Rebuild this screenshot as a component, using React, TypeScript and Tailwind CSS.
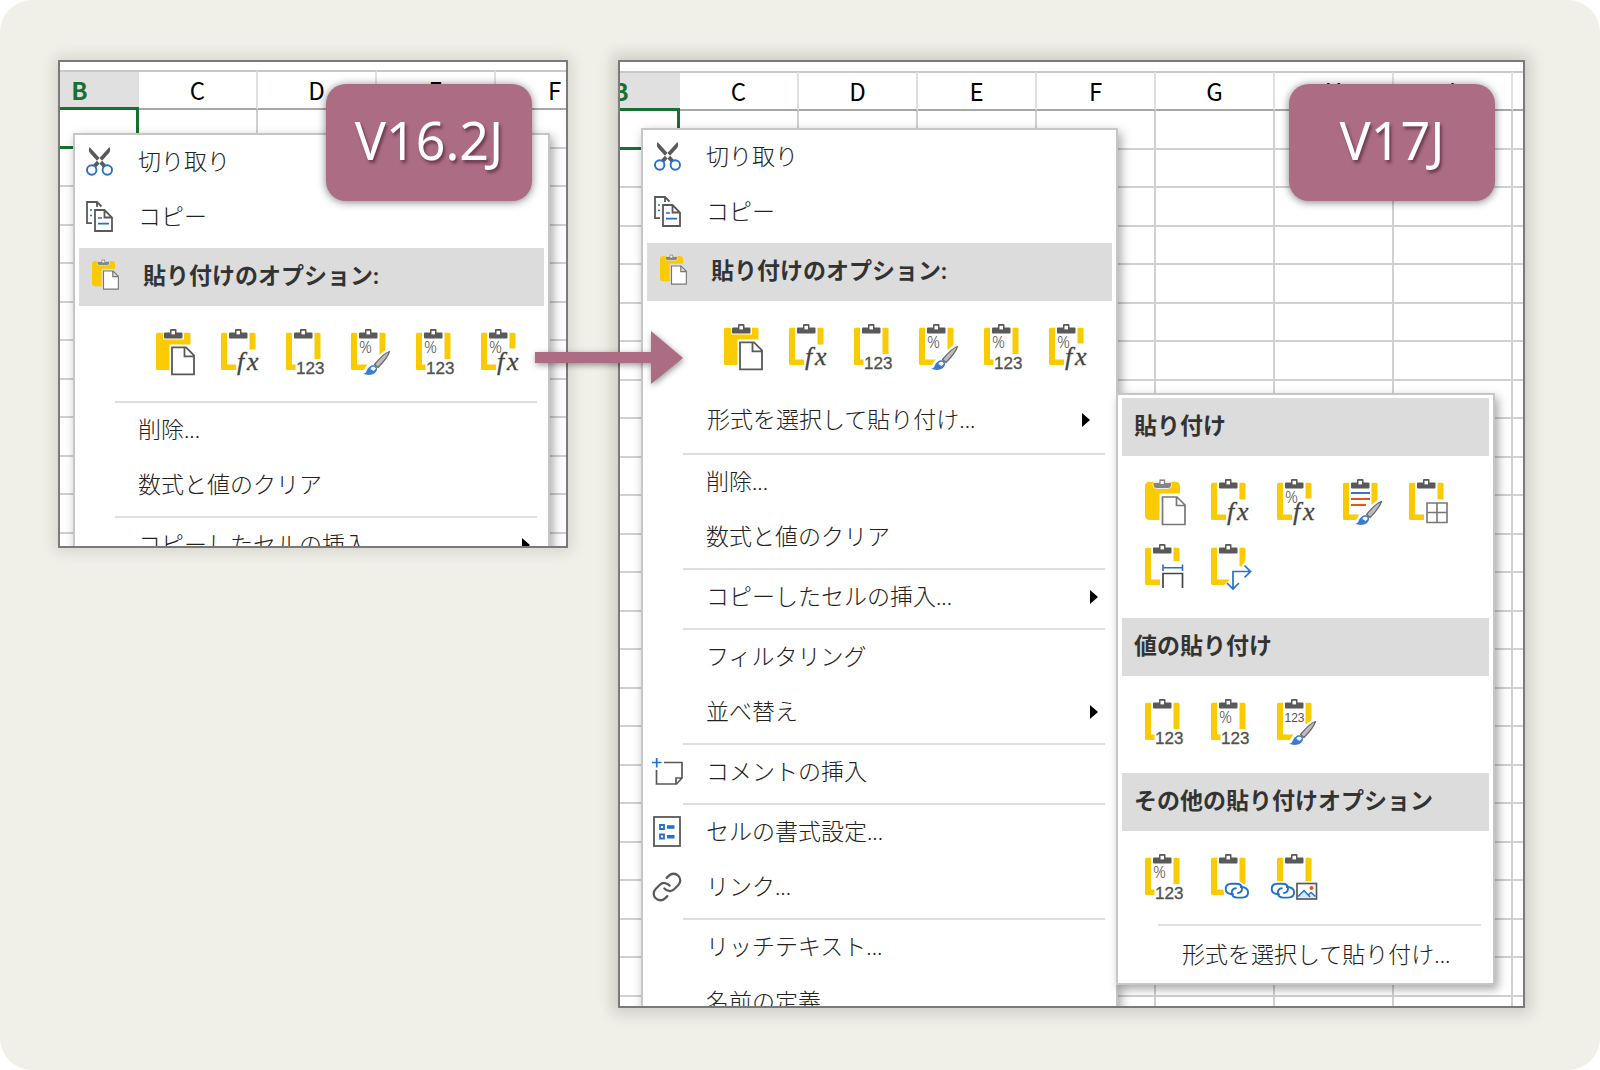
import React from "react";
import { Link as LinkIcon } from "lucide-react";

const GRAY = "#595959";
const BLUE = "#2570c8";
const YELLOW = "#f9cb00";

/* ---------- clipboard icons (40 x 48 artboard) ---------- */

function Clip({ color = GRAY }: { color?: string }) {
  return (
    <g>
      <path d="M7 2.5h21v8H7z" fill="#fff" />
      <path d="M8 4.5q0-1 1-1h5V1q0-1 1-1h4.500q1 0 1 1v2.500h5q1 0 1 1v4q0 1-1 1H9q-1 0-1-1z" fill={color} />
      <rect x="15.500" y="1.800" width="3.500" height="3.600" fill="#fff" />
    </g>
  );
}

function Frame({ arm = 20.500, foot = 15 }: { arm?: number; foot?: number }) {
  return (
    <g fill={YELLOW}>
      <path d={`M1.500 3.700H6V35.500H${foot}V41H1.500Q0 41 0 39.500V5.200Q0 3.700 1.500 3.700Z`} />
      <path d={`M28.500 3.700H33Q34.500 3.700 34.500 5.200V${arm}H28.500Z`} />
    </g>
  );
}

function Svg({ children }: { children: React.ReactNode }) {
  return (
    <svg viewBox="0 0 40 48" className="h-12 w-10 overflow-visible" aria-hidden="true">
      {children}
    </svg>
  );
}

const Fx = () => (
  <text x="16 26" y="41" fontFamily="Liberation Serif, serif" fontStyle="italic" fontSize="26" fill="#444" stroke="#444" strokeWidth="0.3">
    fx
  </text>
);
const Num = () => (
  <text x="10" y="45" fontFamily="Liberation Sans, sans-serif" fontSize="17" fill="#505050" stroke="#505050" strokeWidth="0.3">
    123
  </text>
);
const Percent = () => (
  <text x="8" y="24" fontFamily="Noto Sans, sans-serif" fontWeight="300" fontSize="16" fill="#505050">
    %
  </text>
);

const Brush = () => (
  <g>
    <path d="M9 47 16 36 38 18 42 24 26 46Z" fill="#fff" />
    <path d="M38.500 22.500Q33 24 23.500 35.500L27 38.500Q36.500 29 38.500 22.500Z" fill="#bdbdbd" stroke="#666" strokeWidth="1.200" strokeLinejoin="round" />
    <path d="M22.500 36.500q2.700.3 3.500 3 .2 4-5 6-4.500 1.200-9-.7 3-.3 4-3.800 2-4.500 6.500-4.500Z" fill="#3d7bcb" />
    <path d="M22 36.800q3 0 3.500 3l-2.800 3-4-2.500q.3-3 3.300-3.500Z" fill="#fff" stroke="#3d7bcb" strokeWidth="1.200" />
  </g>
);

const CHAIN_LEFT = "M8.500 11.800Q1.200 11.500 1.200 6.500 1.200 1.200 7 1.200H12Q17.500 1.200 17.500 6 17.500 10 13.500 10.500";
const CHAIN_RIGHT = "M16.300 4.500Q23.600 4.800 23.600 9.800 23.600 15.100 17.800 15.100H12.800Q7.300 15.100 7.300 10.300 7.300 6.300 11.300 5.800";

const Chain = () => (
  <g fill="none" strokeLinecap="round">
    <path d={CHAIN_LEFT} stroke="#fff" strokeWidth="5" />
    <path d={CHAIN_RIGHT} stroke="#fff" strokeWidth="5" />
    <path d={CHAIN_LEFT} stroke={BLUE} strokeWidth="1.900" />
    <path d={CHAIN_RIGHT} stroke={BLUE} strokeWidth="1.900" />
  </g>
);

function PasteIcon() {
  return (
    <Svg>
      <path d="M1.500 3.700H33Q34.500 3.700 34.500 5.200V15.500H13.500V41H1.500Q0 41 0 39.500V5.200Q0 3.700 1.500 3.700Z" fill={YELLOW} />
      <Clip />
      <path d="M16 18.300H30L38 26.300V45.300H16ZM28.500 18.300V27.300H38" fill="#fff" stroke={GRAY} strokeWidth="1.800" />
    </Svg>
  );
}

function PasteRound({ className }: { className: string }) {
  return (
    <svg viewBox="0 0 41 48" className={className} aria-hidden="true">
      <path d="M5 2.700H30Q35 2.700 35 7.700V14.500H14.500V41H5Q0 41 0 36V7.700Q0 2.700 5 2.700Z" fill={YELLOW} />
      <path d="M9 3.500h5V1q0-1 1-1h4.500q1 0 1 1v2.500h5q1 0 1 1V6q0 3.500-3.500 3.500H11.500Q8 9.500 8 6V4.500q0-1 1-1z" fill="#858585" stroke="#fff" strokeWidth="0.800" />
      <rect x="15.600" y="2" width="3.200" height="3" fill="#fff" />
      <path d="M17.500 18H32L40 26V45.500H17.500ZM31.500 18V26.500H40" fill="#fff" stroke="#777" strokeWidth="1.700" />
    </svg>
  );
}

const FormulaIcon = () => (
  <Svg><Frame /><Clip /><Fx /></Svg>
);
const ValueIcon = () => (
  <Svg><Frame arm={30} foot={9.500} /><Clip /><Num /></Svg>
);
const FormatIcon = () => (
  <Svg><Frame arm={30} foot={19} /><Clip /><Percent /><Brush /></Svg>
);
const ValueFormatIcon = () => (
  <Svg><Frame arm={30} foot={9.500} /><Clip /><Percent /><Num /></Svg>
);
const FormulaFormatIcon = () => (
  <Svg><Frame arm={19.500} /><Clip /><Percent /><Fx /></Svg>
);
const KeepSourceIcon = () => (
  <Svg>
    <Frame arm={30} foot={19} />
    <Clip />
    <path d="M8 14H27" stroke="#3b74c6" strokeWidth="2" />
    <path d="M8 20H27M8 26H23" stroke="#e0561f" strokeWidth="2" />
    <Brush />
  </Svg>
);
const BordersIcon = () => (
  <Svg>
    <Frame arm={20.500} />
    <Clip />
    <path d="M18 24H38V43.500H18ZM28 24V43.500M18 33.500H38" fill="#fff" stroke="#777" strokeWidth="1.600" />
  </Svg>
);
const ColumnWidthIcon = () => (
  <Svg>
    <Frame arm={17} />
    <Clip />
    <path d="M18 20.500V27M37.500 20.500V27M18 23.700H37.500" fill="none" stroke={BLUE} strokeWidth="1.600" />
    <path d="M18 44V29.500H37.500V44" fill="#fff" stroke="#444" strokeWidth="1.700" />
  </Svg>
);
const TransposeIcon = () => (
  <Svg>
    <g fill={YELLOW}>
      <path d="M1.500 3.700H6V35.500H19L13 41H1.500Q0 41 0 39.500V5.200Q0 3.700 1.500 3.700Z" />
      <path d="M28.500 3.700H33Q34.500 3.700 34.500 5.200V17L30 22.500H28.500Z" />
    </g>
    <Clip />
    <path d="M39 27.500H22V44.500M33.500 21.500L39.500 27.500L33.500 33.500M16 39L22 45L28 39" fill="none" stroke={BLUE} strokeWidth="1.700" />
  </Svg>
);
const ValueSourceIcon = () => (
  <Svg>
    <Frame arm={25} foot={17} />
    <Clip />
    <text x="7.500" y="23" fontFamily="Liberation Sans, sans-serif" fontSize="12" fill="#505050">123</text>
    <Brush />
  </Svg>
);
const PasteLinkIcon = () => (
  <Svg>
    <Frame arm={30} foot={13} />
    <Clip />
    <g transform="translate(13.500 28.500)"><Chain /></g>
  </Svg>
);
const LinkedPictureIcon = () => (
  <Svg>
    <g fill={YELLOW}>
      <path d="M0 27V5.200Q0 3.700 1.500 3.700H6V27Z" />
      <path d="M28.500 3.700H33Q34.500 3.700 34.500 5.200V27H28.500Z" />
    </g>
    <Clip />
    <g transform="translate(-6.500 28.500)"><Chain /></g>
    <rect x="20" y="29.500" width="19.500" height="15.500" fill="#fff" stroke={GRAY} strokeWidth="1.700" />
    <path d="M21 43.500V42L27 36 31.500 40.500 34 38.500 38.500 42.500V44Z" fill="#d7e7f8" />
    <path d="M21 42.500L27 36.500 33 43M31 41L34 38.500 38.500 42.500" fill="none" stroke={BLUE} strokeWidth="1.500" />
    <circle cx="34.500" cy="34" r="2" fill="#e0561f" />
  </Svg>
);

/* ---------- menu icons ---------- */

const CutIcon = () => (
  <svg viewBox="0 0 27 29" className="h-[29px] w-[27px]" aria-hidden="true">
    <path d="M3.500 0 20 18 17 20.500 4 6Q2 3.500 3.500 0ZM23.500 0 7 18 10 20.500 23 6Q25 3.500 23.500 0Z" fill={GRAY} />
    <g fill="#fff" stroke={BLUE} strokeWidth="1.900">
      <circle cx="5.700" cy="23" r="4.700" />
      <circle cx="21.300" cy="23" r="4.700" />
    </g>
  </svg>
);

const CopyIcon = () => (
  <svg viewBox="0 0 27 31" className="h-[31px] w-[27px]" aria-hidden="true">
    <g fill="none" stroke={GRAY} strokeWidth="1.800">
      <path d="M6 22.200H1V1H11L15.500 5.500M11 1V6" />
      <path d="M9 9H18.500L26 16.500V30H9ZM18.500 9V16.500H26" />
    </g>
    <path d="M4 9H6M4 14.500H6M12 17H16M12 22.700H23" stroke={BLUE} strokeWidth="1.700" />
  </svg>
);

const CommentIcon = () => (
  <svg viewBox="0 0 31 28" className="h-7 w-[31px] overflow-visible" aria-hidden="true">
    <path d="M12 4.500H30V20L24.500 26H4.500V12M24 26V20H30" fill="none" stroke={GRAY} strokeWidth="1.700" />
    <path d="M0 4.500H9.500M4.700 0V9.500" stroke={BLUE} strokeWidth="1.700" />
  </svg>
);

const FormatCellsIcon = () => (
  <svg viewBox="0 0 28 31" className="h-[31px] w-7" aria-hidden="true">
    <rect x="1" y="1" width="26" height="29" fill="#fff" stroke={GRAY} strokeWidth="1.800" />
    <path d="M7 9H11V13H7ZM7 18.500H11V22.500H7Z" fill="none" stroke={BLUE} strokeWidth="1.800" />
    <path d="M14 11H21.500M14 20.800H21.500" stroke={BLUE} strokeWidth="3.400" />
  </svg>
);

const HyperlinkIcon = () => <LinkIcon size={32} strokeWidth={1.7} color={GRAY} aria-hidden="true" />;

/* ---------- menu parts ---------- */

type ItemProps = { label: string; icon?: React.ReactNode; arrow?: boolean };

function Item({ label, icon, arrow }: ItemProps) {
  return (
    <button type="button" className="flex h-[55px] w-full items-center pr-[18px] pb-[2px] text-left font-light">
      <span className="flex w-12 shrink-0 justify-center">{icon}</span>
      <span className="ml-[15px] flex-1 whitespace-nowrap">{label}</span>
      {arrow && <ArrowMark />}
    </button>
  );
}

const ArrowMark = () => (
  <svg viewBox="0 0 8 14" className="h-[14px] w-2" aria-hidden="true">
    <path d="M0 0L8 7L0 14Z" fill="#000" />
  </svg>
);

const Divider = () => <div className="mt-[3px] mr-[11px] ml-10 h-[2px] bg-[#dedede]" />;

function Band({ label, icon }: { label: string; icon?: React.ReactNode }) {
  return (
    <h2 className="flex h-[58px] items-center bg-[#dcdcdc] pb-1 pl-3 font-bold text-[#333]">
      {icon && <span className="mr-6 ml-px">{icon}</span>}
      {label}
    </h2>
  );
}

type NamedIcon = [string, React.ReactNode];

function IconRow({ icons, className }: { icons: NamedIcon[]; className: string }) {
  return (
    <div className={className}>
      {icons.map(([name, icon]) => (
        <button key={name} type="button" aria-label={name} className="h-12 w-10">
          {icon}
        </button>
      ))}
    </div>
  );
}

const quickPaste: NamedIcon[] = [
  ["貼り付け", <PasteIcon />],
  ["数式", <FormulaIcon />],
  ["値", <ValueIcon />],
  ["書式設定", <FormatIcon />],
  ["値と数値の書式", <ValueFormatIcon />],
  ["数式と数値の書式", <FormulaFormatIcon />],
];

function MenuHead() {
  return (
    <>
      <Item label="切り取り" icon={<CutIcon />} />
      <Item label="コピー" icon={<CopyIcon />} />
      <div className="mx-1 mt-[3px]">
        <Band label="貼り付けのオプション:" icon={<PasteRound className="h-8 w-[27px]" />} />
      </div>
      <IconRow icons={quickPaste} className="flex h-[92px] gap-[25px] pt-[23px] pl-[81px]" />
    </>
  );
}

function PasteSubmenu() {
  return (
    <div className="absolute top-[331px] left-[496px] w-[379px] border-2 border-[#c6c6c6] bg-white px-1 pt-[3px] shadow-[3px_4px_9px_rgba(0,0,0,0.35)]">
      <Band label="貼り付け" />
      <IconRow
        className="flex h-[162px] flex-wrap content-start gap-x-[26px] gap-y-[17px] pt-[23px] pl-[23px]"
        icons={[
          ["貼り付け", <PasteRound className="h-12 w-[41px]" />],
          ["数式", <FormulaIcon />],
          ["数式と数値の書式", <FormulaFormatIcon />],
          ["元の書式を保持", <KeepSourceIcon />],
          ["罫線なし", <BordersIcon />],
          ["元の列幅を保持", <ColumnWidthIcon />],
          ["行/列の入れ替え", <TransposeIcon />],
        ]}
      />
      <Band label="値の貼り付け" />
      <IconRow
        className="flex h-[97px] gap-[26px] pt-[23px] pl-[23px]"
        icons={[
          ["値", <ValueIcon />],
          ["値と数値の書式", <ValueFormatIcon />],
          ["値と元の書式", <ValueSourceIcon />],
        ]}
      />
      <Band label="その他の貼り付けオプション" />
      <IconRow
        className="flex h-[90px] gap-[26px] pt-[23px] pl-[23px]"
        icons={[
          ["書式設定", <ValueFormatIcon />],
          ["リンク貼り付け", <PasteLinkIcon />],
          ["リンクされた図", <LinkedPictureIcon />],
        ]}
      />
      <div className="mt-[3px] mr-2 ml-9 h-[2px] bg-[#dedede]" />
      <button type="button" className="flex h-[57px] w-full items-center pl-[60px] text-left font-light">
        形式を選択して貼り付け...
      </button>
    </div>
  );
}

/* ---------- spreadsheet ---------- */

function Sheet({ columns, rows, className }: { columns: string[]; rows: number; className: string }) {
  return (
    <table className={className} style={{ width: columns.length * 119 }}>
      <thead>
        <tr className="h-10">
          {columns.map((c, i) => (
            <th
              key={c}
              scope="col"
              className={
                i === 0
                  ? "border-t-2 border-b-[3px] border-t-[#c8c8c8] border-b-[#16702f] bg-[#e0e0e0] p-0 text-center font-bold text-[#1a6f33]"
                  : "border-t-2 border-r-2 border-b-2 border-t-[#c8c8c8] border-r-[#dce3dc] border-b-[#a8a8a8] p-0 text-center font-normal text-black"
              }
            >
              {c}
            </th>
          ))}
        </tr>
      </thead>
      <tbody>
        {Array.from({ length: rows }, (_, r) => (
          <tr key={r} className={r % 2 === 0 ? "h-[39px]" : "h-[38px]"}>
            {columns.map((c, i) => (
              <td
                key={c}
                className={
                  r === 0 && i === 0
                    ? "border-r-[3px] border-b-[3px] border-[#16702f] p-0"
                    : "border-r-2 border-b-2 border-[#d0d0d0] p-0"
                }
              />
            ))}
          </tr>
        ))}
      </tbody>
    </table>
  );
}

function Badge({ text, className }: { text: string; className: string }) {
  return (
    <div className={className}>
      <span className="[text-shadow:2px_3px_3px_rgba(60,20,40,0.55)]">{text}</span>
    </div>
  );
}

export default function App() {
  return (
    <main className="min-h-screen bg-white font-['Lato','Noto_Sans_CJK_JP',sans-serif] text-[23px] text-[#222]">
      <div className="grid min-h-screen grid-cols-[510fr_907fr] items-start gap-[50px] rounded-[32px] bg-[#f0f0e8] pt-[60px] pr-[75px] pb-[62px] pl-[58px]">
        <section className="relative z-10 min-w-0">
          <div className="relative h-[488px] overflow-hidden border-2 border-[#7a7a7a] bg-white shadow-[0_0_14px_3px_rgba(0,0,0,0.12)]">
            <Sheet
              columns={["B", "C", "D", "E", "F"]}
              rows={12}
              className="mt-2 -ml-10 table-fixed border-separate border-spacing-0 font-['Noto_Sans_CJK_JP',sans-serif] text-2xl leading-8"
            />
            <div className="absolute top-[71px] left-[13px] w-[477px] border-2 border-[#c6c6c6] bg-white shadow-[3px_4px_10px_rgba(0,0,0,0.35)]">
              <MenuHead />
              <Divider />
              <Item label="削除..." />
              <Item label="数式と値のクリア" />
              <Divider />
              <Item label="コピーしたセルの挿入..." arrow />
            </div>
          </div>
          <Badge
            text="V16.2J"
            className="absolute top-6 right-9 flex h-[117px] w-[206px] items-center justify-center rounded-[20px] bg-[#ab6c84] pb-[6px] font-['Noto_Sans',sans-serif] text-[52px] text-white shadow-[0_1px_8px_rgba(0,0,0,0.5)]"
          />
          <svg
            viewBox="0 0 148 54"
            className="absolute top-[271px] -right-[115px] h-[54px] w-[148px] overflow-visible drop-shadow-[1px_2px_3px_rgba(0,0,0,0.4)]"
            aria-hidden="true"
          >
            <path d="M0 21H116V0L148 27L116 53V32H0Z" fill="#ab6c84" />
          </svg>
        </section>

        <section className="relative min-w-0">
          <div className="relative h-[948px] overflow-hidden border-2 border-[#7a7a7a] bg-white shadow-[0_0_14px_6px_rgba(0,0,0,0.14)]">
            <Sheet
              columns={["B", "C", "D", "E", "F", "G", "H", "I", "J"]}
              rows={24}
              className="mt-[9px] -ml-[59px] table-fixed border-separate border-spacing-0 font-['Noto_Sans_CJK_JP',sans-serif] text-2xl leading-8"
            />
            <div className="absolute top-[66px] left-[21px] w-[477px] border-2 border-[#c6c6c6] bg-white shadow-[3px_4px_10px_rgba(0,0,0,0.35)]">
              <MenuHead />
              <div className="pr-2 pb-[2px] pl-px">
                <Item label="形式を選択して貼り付け..." arrow />
              </div>
              <Divider />
              <Item label="削除..." />
              <Item label="数式と値のクリア" />
              <Divider />
              <Item label="コピーしたセルの挿入..." arrow />
              <Divider />
              <Item label="フィルタリング" />
              <Item label="並べ替え" arrow />
              <Divider />
              <Item label="コメントの挿入" icon={<CommentIcon />} />
              <Divider />
              <Item label="セルの書式設定..." icon={<FormatCellsIcon />} />
              <Item label="リンク..." icon={<HyperlinkIcon />} />
              <Divider />
              <Item label="リッチテキスト..." />
              <Item label="名前の定義" />
            </div>
            <PasteSubmenu />
          </div>
          <Badge
            text="V17J"
            className="absolute top-6 right-[30px] flex h-[117px] w-[206px] items-center justify-center rounded-[20px] bg-[#ab6c84] pb-[6px] font-['Noto_Sans',sans-serif] text-[52px] text-white shadow-[0_1px_8px_rgba(0,0,0,0.5)]"
          />
        </section>
      </div>
    </main>
  );
}
